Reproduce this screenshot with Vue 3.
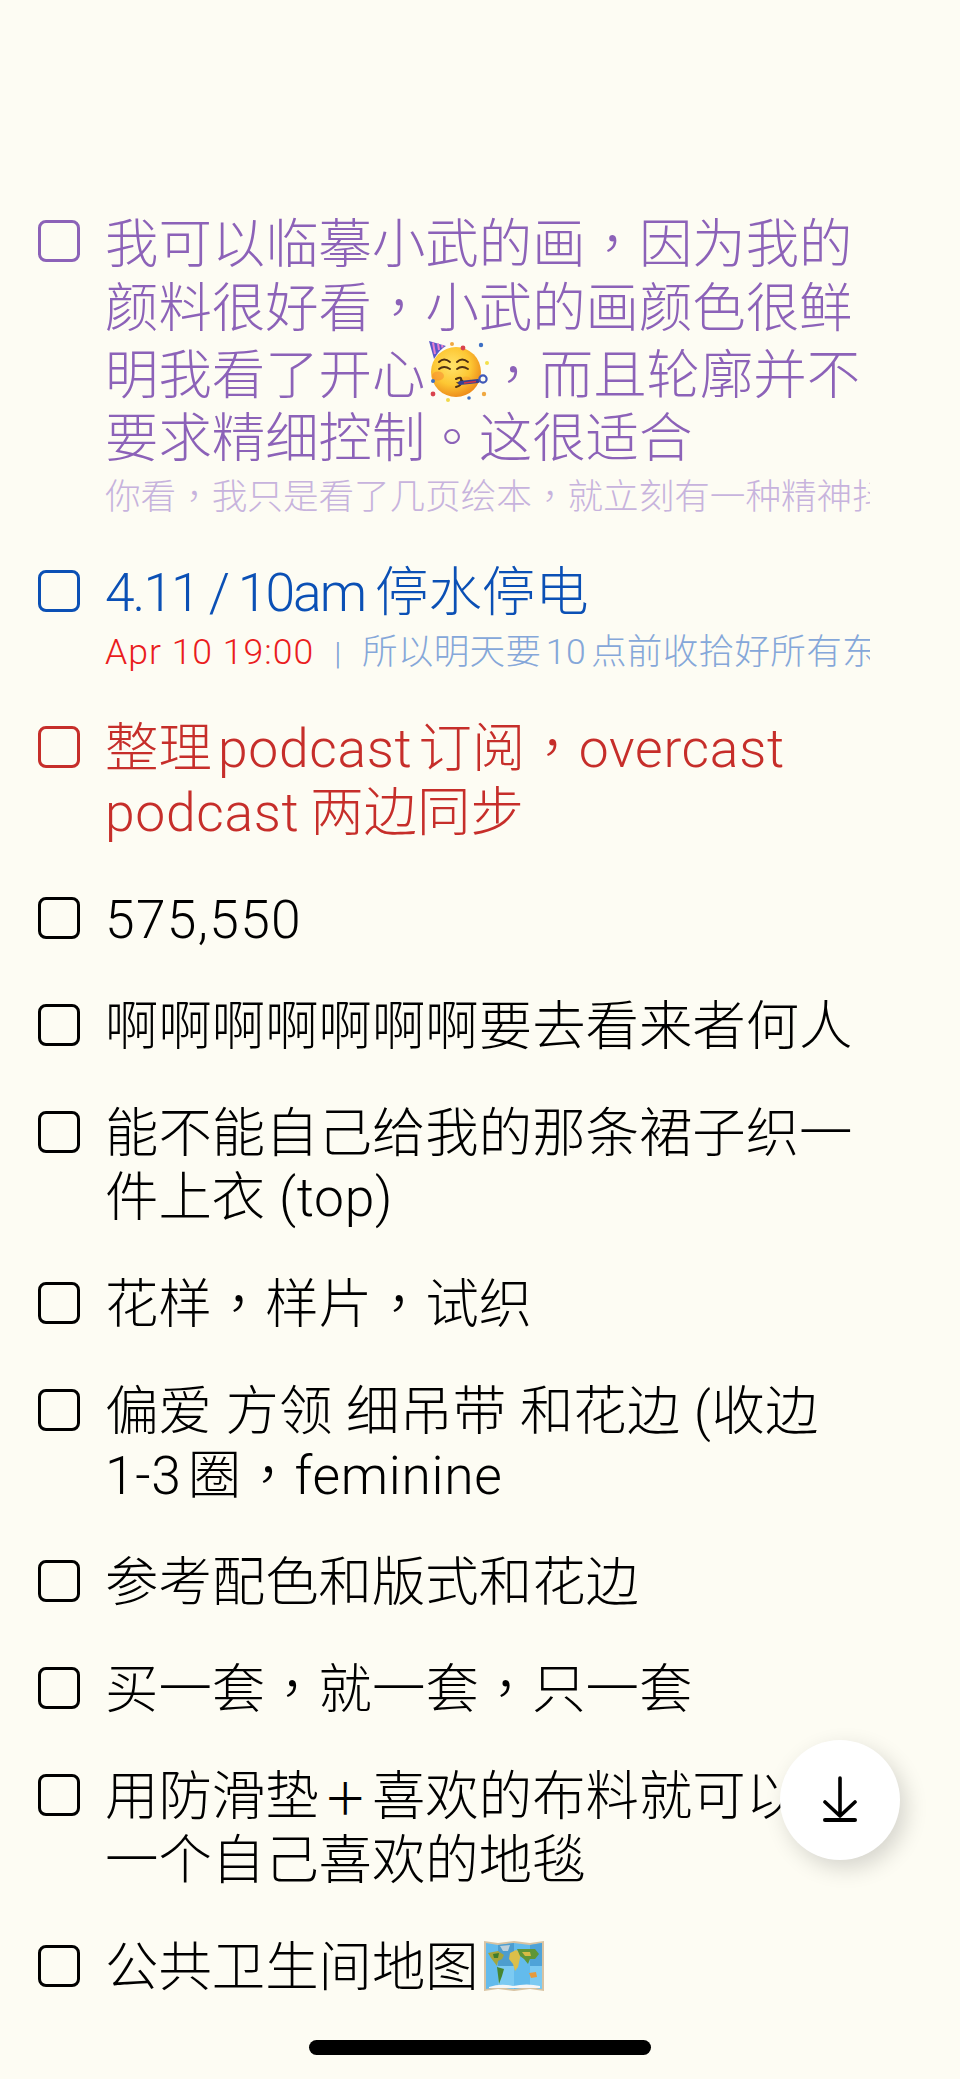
<script setup>
const H = '\u200a'
const items = [
  { color: 'purple', lines: [['我可以临摹小武的画，因为我的'], ['颜料很好看，小武的画颜色很鲜'], ['明我看了开心', { e: 'party' }, '，而且轮廓并不'], ['要求精细控制。这很适合']], sub: [{ t: '你看，我只是看了几页绘本，就立刻有一种精神抖擞的感觉', c: 'sub-purple' }] },
  { color: 'blue tight', lines: [['4.11 / 10am 停水停电']], sub: [{ t: 'Apr 10 19:00', c: 'sub-date' }, { t: '|', c: 'sub-bar' }, { t: `所以明天要${H}10${H}点前收拾好所有东西`, c: 'sub-blue' }] },
  { color: 'red', lines: [[`整理${H}podcast${H}订阅，overcast`], ['podcast 两边同步']] },
  { color: 'digits', lines: [['575,550']] },
  { lines: [['啊啊啊啊啊啊啊要去看来者何人']] },
  { lines: [['能不能自己给我的那条裙子织一'], ['件上衣 (top)']] },
  { lines: [['花样，样片，试织']] },
  { lines: [['偏爱 方领 细吊带 和花边 (收边'], [`1-3${H}圈，feminine`]] },
  { lines: [['参考配色和版式和花边']] },
  { lines: [['买一套，就一套，只一套']] },
  { lines: [['用防滑垫＋喜欢的布料就可以做'], ['一个自己喜欢的地毯']] },
  { lines: [['公共卫生间地图', { e: 'map' }]] },
]

// Split a string into runs so that Latin, CJK punctuation and the plus sign each get their own face.
function runs(text) {
  return text.match(/[\x20-\x7e\u200a]+|[，。]|＋|[^\x20-\x7e\u200a，。＋]+/g).map((t) => ({
    t,
    c: /^[，。]$/.test(t) ? 'punct' : t === '＋' ? 'plus' : /^[\x20-\x7e\u200a]/.test(t) ? 'latin' : 'cjk',
  }))
}
</script>

<template>
  <div class="page">
    <div class="list">
      <div v-for="(item, i) in items" :key="i" class="row" :class="item.color">
        <span class="box"></span>
        <div class="body">
          <div v-for="(line, j) in item.lines" :key="j" class="line">
            <template v-for="(seg, k) in line" :key="k">
              <template v-if="typeof seg === 'string'">
                <span v-for="(r, m) in runs(seg)" :key="m" :class="r.c">{{ r.t }}</span>
              </template>
              <svg v-else-if="seg.e === 'party'" class="emoji party" viewBox="0 0 64 64" width="64" height="64">
                <defs>
                  <radialGradient id="pf" cx="42%" cy="38%" r="62%">
                    <stop offset="0" stop-color="#ffe36a" />
                    <stop offset="0.6" stop-color="#fdc733" />
                    <stop offset="1" stop-color="#ee8f1c" />
                  </radialGradient>
                </defs>
                <circle cx="28" cy="32" r="25" fill="url(#pf)" />
                <path d="M1 1 L18 6 Q12 9 6 19 Z" fill="#5b57c9" />
                <path d="M5 2.5 L7 14 M10 3.5 L11 10 M14 5 L14.5 7.5" stroke="#e77fd0" stroke-width="2" fill="none" />
                <ellipse cx="10" cy="36" rx="6" ry="4.5" fill="#f5742c" opacity=".4" />
                <ellipse cx="38" cy="40" rx="5" ry="3.5" fill="#f5742c" opacity=".25" />
                <path d="M11 22q5-5 11 0M11 29q5-4 11 0M29 22q5-5 11 0M29 29q5-4 11 0" stroke="#4e2f12" stroke-width="1.9" fill="none" stroke-linecap="round" />
                <path d="M28 39q6-3 5 1q4 2 -2 3q4 2 -3 4" stroke="#4e2f12" stroke-width="2" fill="none" stroke-linecap="round" />
                <path d="M32 43 L50 41" stroke="#36408f" stroke-width="4" stroke-linecap="round" />
                <path d="M36 43 L48 41.5" stroke="#d3324a" stroke-width="1.5" />
                <circle cx="55" cy="39" r="3.6" fill="none" stroke="#3f58b8" stroke-width="2.2" />
                <circle cx="35" cy="8" r="2.4" fill="#d9434e" />
                <circle cx="24" cy="4" r="2" fill="#f0a840" />
                <circle cx="53" cy="5" r="2.2" fill="#3d6fc4" />
                <circle cx="5" cy="54" r="2.4" fill="#d9434e" />
                <circle cx="5" cy="41" r="2" fill="#3d6fc4" />
                <circle cx="59" cy="23" r="2" fill="#f3e04a" />
                <circle cx="56" cy="54" r="2.2" fill="#f0a840" />
                <circle cx="20" cy="60" r="2" fill="#f1d94a" />
                <circle cx="41" cy="58" r="1.8" fill="#3d6fc4" />
              </svg>
              <svg v-else class="emoji map" viewBox="0 0 62 52" width="62" height="52" preserveAspectRatio="none">
                <path d="M1 1 L15 3 L31 1 L47 3 L61 1 L61 51 L47 49 L31 51 L15 49 L1 51 Z" fill="#d8c3a2" />
                <path d="M3 3 L15 5 L31 3 L47 5 L59 3 L59 49 L47 47 L31 49 L15 47 L3 49 Z" fill="#63bbec" />
                <path d="M15 5 L31 3 L31 26 L15 26 Z" fill="#4d9dce" />
                <path d="M47 5 L59 3 L59 26 L47 26 Z" fill="#4fa3d8" />
                <path d="M15 26 L31 26 L31 49 L15 47 Z" fill="#7ccaf2" />
                <path d="M47 26 L59 26 L59 49 L47 47 Z" fill="#7ccaf2" />
                <path d="M5 13 L15 11 L21 15 L19 19 L15 21 L14 26 L11 22 L8 18 Z" fill="#a4a53b" />
                <path d="M10 14 L16 13 L15 18 L11 18 Z" fill="#3e7d2c" />
                <path d="M14 27 L21 29 L19 36 L16 44 L15 35 Z" fill="#47862f" />
                <path d="M17 6 L27 5 L25 11 L20 11 Z" fill="#bdd0da" />
                <path d="M27 13 L33 10 L38 13 L37 18 L35 27 L32 31 L30 24 L26 19 Z" fill="#dcbf49" />
                <path d="M34 9 L52 9 L56 14 L52 19 L47 19 L45 24 L41 19 L37 16 Z" fill="#5f9637" />
                <path d="M39 12 L47 12 L48 16 L42 16 Z" fill="#d8bb45" />
                <path d="M46 33 L53 32 L54 37 L48 38 Z" fill="#e79a3c" />
                <path d="M6 47 Q18 43 30 46 Q44 43 57 46 L57 48 L6 48 Z" fill="#f4f6f6" />
              </svg>
            </template>
          </div>
          <div v-if="item.sub" class="sub">
            <span v-for="(s, k) in item.sub" :key="k" :class="s.c">
              <span v-for="(r, m) in runs(s.t)" :key="m" :class="r.c === 'plus' ? 'cjk' : r.c">{{ r.t }}</span>
            </span>
          </div>
        </div>
      </div>
    </div>

    <button class="fab" type="button" aria-label="Scroll to bottom">
      <svg viewBox="0 0 40 50" width="40" height="50">
        <path d="M20 3 V41 M5 27 L20 41 L35 27" fill="none" stroke="#000" stroke-width="3.6" stroke-linecap="round" stroke-linejoin="round" />
        <path d="M5 45 H35" fill="none" stroke="#000" stroke-width="4" stroke-linecap="round" />
      </svg>
    </button>
    <div class="home"></div>
  </div>
</template>

<style scoped>
.page {
  position: relative;
  width: 960px;
  height: 2079px;
  overflow: hidden;
  background: #fdfcf3;
  color: #000;
  font-family: Inter, "Noto Sans CJK SC", "Noto Sans", sans-serif;
  font-weight: 300;
}
.list {
  display: flex;
  flex-direction: column;
  gap: 43px;
  padding: 212px 0 0 38px;
}
.row {
  display: flex;
  gap: 25px;
}
.box {
  flex: none;
  box-sizing: border-box;
  width: 42px;
  height: 42px;
  margin-top: 10px;
  border: 3px solid currentColor;
  border-radius: 8px;
}
.purple .box {
  margin-top: 8px;
}
.body {
  width: 765px;
  min-width: 0;
}
.line {
  height: 64px;
  font-size: 53.4px;
  line-height: 64px;
  white-space: nowrap;
}
.purple .line:nth-child(4) {
  margin-top: 2px;
}
.purple .sub {
  height: 47px;
}
.cjk,
.latin,
.punct,
.plus {
  line-height: 0;
}
.latin {
  font-family: Roboto, "Noto Sans CJK SC", sans-serif;
  letter-spacing: 0.7px;
}
.red .latin {
  word-spacing: -3px;
}
.tight .line .latin {
  letter-spacing: -2px;
  word-spacing: -1px;
}
.digits .latin {
  letter-spacing: 1.3px;
}
.punct {
  font-family: Inter, "Noto Sans CJK TC", sans-serif;
}
.plus {
  display: inline-block;
  width: 53.4px;
  text-align: center;
  font-size: 44px;
  font-weight: 400;
}
.emoji {
  display: inline-block;
}
.party {
  vertical-align: -10px;
  margin: 0 -6px 0 3px;
}
.map {
  vertical-align: -6px;
  margin-left: 4px;
}
.sub {
  height: 49px;
  overflow: hidden;
  font-size: 35.6px;
  line-height: 54px;
  white-space: nowrap;
}
.blue .sub {
  line-height: 56px;
}
.purple { color: #8c62b8; }
.blue { color: #0b50b5; }
.red { color: #c62e2a; }
.sub-purple { color: #c7b3dd; }
.sub-date { color: #ea1c20; }
.sub-date .latin { letter-spacing: 1px; }
.sub-bar { color: #7fa2d6; margin: 0 20px; font-size: 32px; }
.sub-blue { color: #85a7d9; letter-spacing: 0.3px; }
.fab {
  position: absolute;
  left: 780px;
  top: 1740px;
  display: flex;
  align-items: center;
  justify-content: center;
  width: 120px;
  height: 120px;
  padding: 0;
  border: none;
  border-radius: 50%;
  background: #fff;
  box-shadow: 6px 8px 22px rgba(0, 0, 0, 0.16);
}
.home {
  position: absolute;
  left: 309px;
  top: 2040px;
  width: 342px;
  height: 15px;
  border-radius: 8px;
  background: #000;
}
</style>
